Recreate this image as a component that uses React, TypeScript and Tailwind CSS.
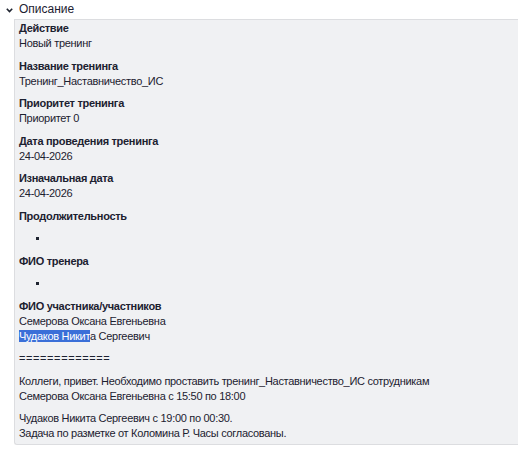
import React from "react";

const fields: { label: string; value?: string }[] = [
  { label: "Действие", value: "Новый тренинг" },
  { label: "Название тренинга", value: "Тренинг_Наставничество_ИС" },
  { label: "Приоритет тренинга", value: "Приоритет 0" },
  { label: "Дата проведения тренинга", value: "24-04-2026" },
  { label: "Изначальная дата", value: "24-04-2026" },
];

function Bullet() {
  return (
    <ul className="pl-[17px] mt-[7px] mb-[8px]">
      <li className="flex items-center h-[15px]">
        <span className="w-[3px] h-[3px] bg-[#1f2430]" />
      </li>
    </ul>
  );
}

export default function App() {
  return (
    <div
      className="bg-white min-h-[467px] text-[11px] leading-[15px] tracking-[-0.3px] text-[#1c2130]"
      style={{ fontFamily: '"Liberation Sans", Arial, sans-serif' }}
    >
      <div className="flex items-center h-[19px] pl-[6px] gap-[6px] text-[12px] tracking-normal">
        <svg width="7" height="5" viewBox="0 0 7 5" className="mt-[1px]">
          <path d="M0.8 0.8 L3.5 3.6 L6.2 0.8" fill="none" stroke="#1f2430" strokeWidth="1.6" />
        </svg>
        <span>Описание</span>
      </div>

      <div className="ml-[14px] bg-[#f0f1f3] border border-r-0 border-[#dcdde0] rounded-bl-[3px] pl-[4px] pt-[1px] pb-[3px]">
        {fields.map((f) => (
          <div key={f.label} className="mb-[7.5px]">
            <div className="font-bold">{f.label}</div>
            <div>{f.value}</div>
          </div>
        ))}

        <div className="font-bold">Продолжительность</div>
        <Bullet />
        <div className="font-bold">ФИО тренера</div>
        <Bullet />

        <div className="mb-[7.5px]">
          <div className="font-bold">ФИО участника/участников</div>
          <div>Семерова Оксана Евгеньевна</div>
          <div>
            <span className="bg-[#3a6fd8] text-white">Чудаков Никит</span>а Сергеевич
          </div>
        </div>

        <div className="mb-[7.5px] tracking-[0.6px]">=============</div>

        <div className="mb-[7.5px]">
          <div>Коллеги, привет. Необходимо проставить тренинг_Наставничество_ИС сотрудникам</div>
          <div>Семерова Оксана Евгеньевна с 15:50 по 18:00</div>
        </div>

        <div>
          <div>Чудаков Никита Сергеевич с 19:00 по 00:30.</div>
          <div>Задача по разметке от Коломина Р. Часы согласованы.</div>
        </div>
      </div>
    </div>
  );
}
